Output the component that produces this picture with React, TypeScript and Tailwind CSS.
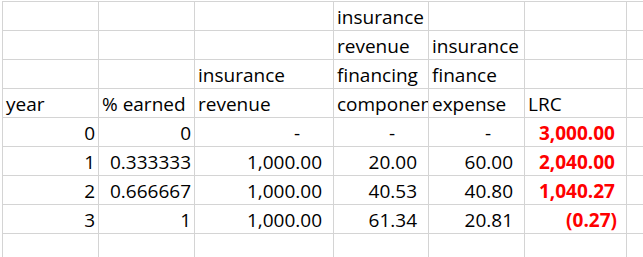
type Cell = { v: string; k?: "txt" | "num" | "acc" | "dash" | "red" | "neg" };

const cols = ["w-[96px]", "w-[96px]", "w-[139px]", "w-[95px]", "w-[96px]", "w-[102px]", "w-[60px]"];

const t = (v: string): Cell => ({ v, k: "txt" });
const n = (v: string): Cell => ({ v, k: "num" });
const a = (v: string): Cell => ({ v, k: "acc" });
const d: Cell = { v: "-", k: "dash" };
const r = (v: string): Cell => ({ v, k: "red" });
const e: Cell = { v: "" };

const rows: Cell[][] = [
  [e, e, e, t("insurance"), e, e, e],
  [e, e, e, t("revenue"), t("insurance"), e, e],
  [e, e, t("insurance"), t("financing"), t("finance"), e, e],
  [t("year"), t("% earned"), t("revenue"), t("component"), t("expense"), t("LRC"), e],
  [n("0"), n("0"), d, d, d, r("3,000.00"), e],
  [n("1"), n("0.333333"), a("1,000.00"), a("20.00"), a("60.00"), r("2,040.00"), e],
  [n("2"), n("0.666667"), a("1,000.00"), a("40.53"), a("40.80"), r("1,040.27"), e],
  [n("3"), n("1"), a("1,000.00"), a("61.34"), a("20.81"), { v: "(0.27)", k: "neg" }, e],
];

function cellClass(k?: Cell["k"]) {
  switch (k) {
    case "txt":
      return "justify-start pl-[3px]";
    case "num":
      return "justify-end pr-[3px]";
    case "acc":
      return "justify-end pr-[11px]";
    case "dash":
      return "justify-end pr-[33px]";
    case "red":
      return "justify-end pr-[11px] font-bold text-[#ff0000]";
    case "neg":
      return "justify-end pr-[9px] font-bold text-[#ff0000]";
    default:
      return "";
  }
}

export default function App() {
  return (
    <div
      className="h-[257px] w-[643px] overflow-hidden bg-white pl-[2px] pt-[1px] text-[19px] leading-none text-black"
      style={{ fontFamily: "'Open Sans', sans-serif" }}
    >
      <div className="w-[700px] border-l border-t border-[#d4d4d4]">
        {rows.map((row, i) => (
          <div key={i} className="flex">
            {row.map((c, j) => (
              <div
                key={j}
                className={`flex h-[29px] shrink-0 items-end overflow-hidden whitespace-nowrap border-b border-[#d4d4d4] pb-[3px] ${
                  j < 6 ? "border-r" : ""
                } ${cols[j]} ${cellClass(c.k)}`}
              >
                {c.v}
              </div>
            ))}
          </div>
        ))}
        <div className="flex">
          {cols.map((w, j) => (
            <div key={j} className={`h-[29px] shrink-0 border-[#d4d4d4] ${j < 6 ? "border-r" : ""} ${w}`} />
          ))}
        </div>
      </div>
    </div>
  );
}
